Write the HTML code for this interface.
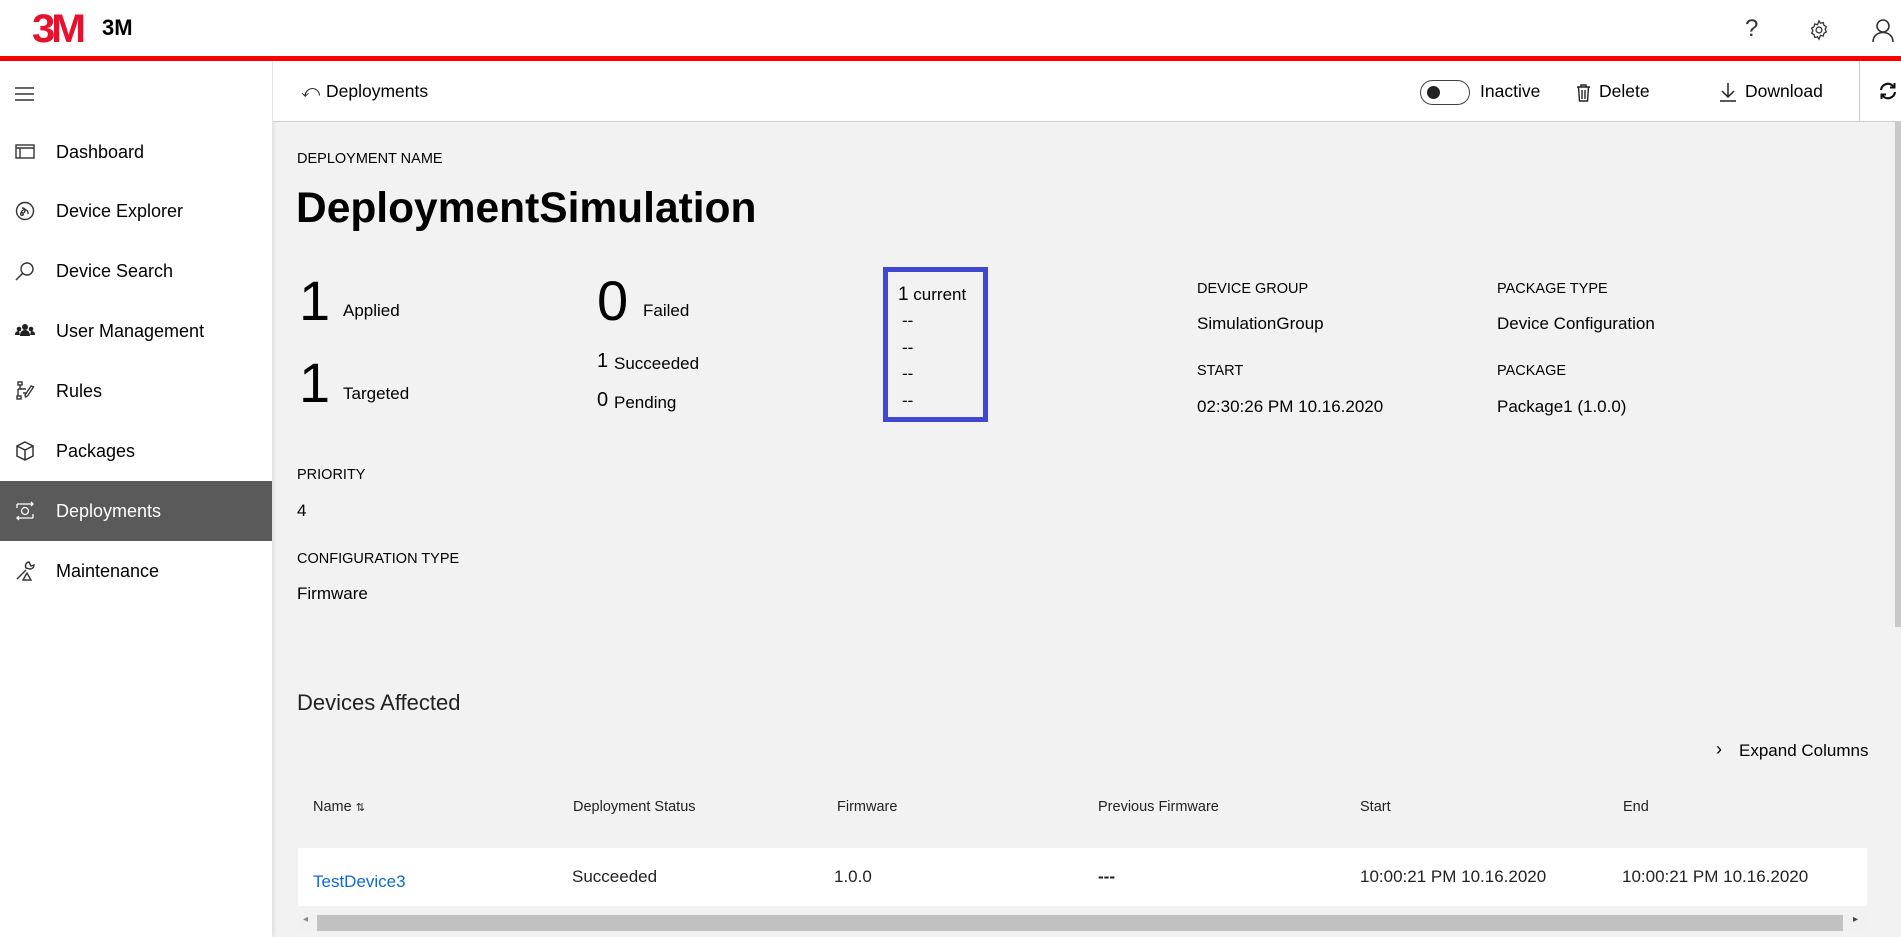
<!DOCTYPE html>
<html><head><meta charset="utf-8"><style>
*{margin:0;padding:0;box-sizing:border-box}
body{width:1901px;height:937px;overflow:hidden;background:#f2f2f2;font-family:"Liberation Sans",Arial,sans-serif;color:#000;position:relative}
.a{position:absolute;white-space:nowrap}
#top{position:absolute;left:0;top:0;width:1901px;height:56px;background:#fff}
#red{position:absolute;left:0;top:56px;width:1901px;height:5px;background:#f00}
#side{position:absolute;left:0;top:61px;width:272px;height:876px;background:#fff;box-shadow:2px 0 4px rgba(0,0,0,.08)}
.ni{position:absolute;left:0;width:272px;height:60px;font-size:18px;line-height:60px}
.ni span{position:absolute;left:56px}
.ni svg{position:absolute;left:15px;top:20px}
#bar{position:absolute;left:273px;top:61px;width:1628px;height:61px;background:#fff;border-bottom:1px solid #ccc}
.lab{font-size:14.5px}
.val{font-size:17px}
.th{font-size:14.5px;color:#222}
.td{font-size:17px;color:#222}
</style></head><body>
<div id="top">
 <div class="a" style="left:32px;top:7px;font-size:40px;font-weight:bold;color:#e8112d;letter-spacing:-4px;transform:scaleX(1.05);transform-origin:left">3M</div>
 <div class="a" style="left:102px;top:15px;font-size:22px;font-weight:bold">3M</div>
 <div class="a" style="left:1745px;top:15px;font-size:24px;color:#333">?</div>
 <svg class="a" style="left:1808px;top:19px" width="22" height="22" viewBox="0 0 24 24" fill="none" stroke="#333" stroke-width="1.4"><circle cx="12" cy="12" r="3.2"/><path d="M12 2l1.6 2.6 3-.8.8 3 2.6 1.6-1.3 2.8 1.3 2.8-2.6 1.6-.8 3-3-.8L12 22l-1.6-2.6-3 .8-.8-3L4 15.6 5.3 12.8 4 10l2.6-1.6.8-3 3 .8z"/></svg>
 <svg class="a" style="left:1872px;top:18px" width="22" height="24" viewBox="0 0 22 24" fill="none" stroke="#333" stroke-width="1.6"><circle cx="11" cy="8" r="6"/><path d="M1 24c0-6 4.5-9.5 10-9.5S21 18 21 24"/></svg>
</div>
<div id="red"></div>
<div id="side">
 <svg class="a" style="left:15px;top:26px" width="19" height="14"><path d="M0 1h19M0 7h19M0 13h19" stroke="#333" stroke-width="1.4"/></svg>
 <div class="ni" style="top:61px"><svg width="20" height="20" viewBox="0 0 20 20" fill="none" stroke="#333" stroke-width="1.4"><rect x="1" y="3" width="18" height="13"/><path d="M1 6h18M5 6v10"/></svg><span>Dashboard</span></div>
 <div class="ni" style="top:120px"><svg width="20" height="20" viewBox="0 0 20 20" fill="none" stroke="#333" stroke-width="1.4"><circle cx="10" cy="10" r="8.5"/><path d="M6 12c2-6 8-3 7 1M7 7c3 0 4 2 2 5"/><circle cx="7" cy="13" r="1.3"/></svg><span>Device Explorer</span></div>
 <div class="ni" style="top:180px"><svg width="20" height="20" viewBox="0 0 20 20" fill="none" stroke="#333" stroke-width="1.4"><circle cx="12" cy="8" r="6"/><path d="M8 12L1 19"/></svg><span>Device Search</span></div>
 <div class="ni" style="top:240px"><svg width="20" height="20" viewBox="0 0 20 20" fill="#222"><circle cx="10" cy="6" r="3"/><circle cx="4" cy="8" r="2.3"/><circle cx="16" cy="8" r="2.3"/><path d="M5 15c0-4 2-6 5-6s5 2 5 6zM0 14c0-3 1.5-4 4-4l1 4zM20 14c0-3-1.5-4-4-4l-1 4z"/></svg><span>User Management</span></div>
 <div class="ni" style="top:300px"><svg width="20" height="20" viewBox="0 0 20 20" fill="none" stroke="#333" stroke-width="1.4"><rect x="3" y="1" width="4" height="3"/><rect x="2" y="15" width="4" height="3"/><path d="M5 4v4h6M3 8v7M9 8h-6M8 12h4M16 5l-6 9 .5 2 2-1 6-9z"/></svg><span>Rules</span></div>
 <div class="ni" style="top:360px"><svg width="20" height="20" viewBox="0 0 20 20" fill="none" stroke="#333" stroke-width="1.5"><path d="M10 1l8 4v10l-8 4-8-4V5zM2 5l8 4 8-4M10 9v10"/></svg><span>Packages</span></div>
 <div class="ni" style="top:420px;background:#5a5a5a;color:#fff"><svg width="20" height="20" viewBox="0 0 20 20" fill="none" stroke="#fff" stroke-width="1.3"><circle cx="10" cy="10" r="3.5"/><path d="M2 3h16M2 17h16M2 3v4M18 13v4M16 1l2 2-2 2M4 15l-2 2 2 2"/></svg><span>Deployments</span></div>
 <div class="ni" style="top:480px"><svg width="20" height="20" viewBox="0 0 20 20" fill="none" stroke="#333" stroke-width="1.4"><path d="M2 18l9-9M14 1a4 4 0 0 0-3 6l4 1a4 4 0 0 0 4-4l-3 1-1-2zM12 12l-4 7h8z"/></svg><span>Maintenance</span></div>
</div>
<div id="bar">
 <div class="a" style="left:28px;top:20px;font-size:18px;color:#333">⤺</div>
 <div class="a" style="left:53px;top:20px;font-size:17.5px">Deployments</div>
 <div class="a" style="left:1147px;top:19px;width:50px;height:25px;border:1px solid #444;border-radius:13px;background:#fff"><div style="position:absolute;left:6px;top:5px;width:13px;height:13px;border-radius:50%;background:#222"></div></div>
 <div class="a" style="left:1207px;top:20px;font-size:17.5px">Inactive</div>
 <svg class="a" style="left:1303px;top:23px" width="15" height="18" viewBox="0 0 15 18" fill="none" stroke="#222" stroke-width="1.4"><path d="M1 3h13M5 3V1h5v2M2.5 3l1 14h8l1-14M6 6v9M9 6v9"/></svg>
 <div class="a" style="left:1326px;top:20px;font-size:17.5px">Delete</div>
 <svg class="a" style="left:1446px;top:21px" width="18" height="20" viewBox="0 0 18 20" fill="none" stroke="#222" stroke-width="1.5"><path d="M9 1v14M3 9l6 6 6-6M1 19h16"/></svg>
 <div class="a" style="left:1472px;top:20px;font-size:17.5px">Download</div>
 <div class="a" style="left:1586px;top:0;width:1px;height:60px;background:#ccc"></div>
 <svg class="a" style="left:1606px;top:21px" width="18" height="18" viewBox="0 0 18 18" fill="none" stroke="#111" stroke-width="2.2"><path d="M2 8a7 7 0 0 1 12.5-3.5M16 10a7 7 0 0 1-12.5 3.5"/><path d="M15.5 1v4.5H11M2.5 17v-4.5H7" stroke-width="2"/></svg>
</div>
<div class="a" style="left:1895px;top:122px;width:6px;height:505px;background:#c8c8c8"></div>

<div class="a lab" style="left:297px;top:151px">DEPLOYMENT NAME</div>
<div class="a" style="left:296px;top:185px;font-size:42.5px;font-weight:bold">DeploymentSimulation</div>

<div class="a" style="left:299px;top:268px;font-size:56px">1</div>
<div class="a val" style="left:343px;top:301px">Applied</div>
<div class="a" style="left:299px;top:350px;font-size:56px">1</div>
<div class="a val" style="left:343px;top:384px">Targeted</div>
<div class="a" style="left:597px;top:268px;font-size:56px">0</div>
<div class="a val" style="left:643px;top:301px">Failed</div>
<div class="a" style="left:597px;top:350px;font-size:20px">1</div><div class="a val" style="left:614px;top:354px">Succeeded</div>
<div class="a" style="left:597px;top:389px;font-size:20px">0</div><div class="a val" style="left:614px;top:393px">Pending</div>

<div class="a" style="left:883px;top:267px;width:105px;height:155px;border:5px solid #4048d0"></div>
<div class="a" style="left:898px;top:284px;font-size:17px"><span style="font-size:19px">1</span> current</div>
<div class="a val" style="left:902px;top:311px">--</div>
<div class="a val" style="left:902px;top:338px">--</div>
<div class="a val" style="left:902px;top:364px">--</div>
<div class="a val" style="left:902px;top:391px">--</div>

<div class="a lab" style="left:1197px;top:281px">DEVICE GROUP</div>
<div class="a val" style="left:1197px;top:314px">SimulationGroup</div>
<div class="a lab" style="left:1197px;top:363px">START</div>
<div class="a val" style="left:1197px;top:397px">02:30:26 PM 10.16.2020</div>
<div class="a lab" style="left:1497px;top:281px">PACKAGE TYPE</div>
<div class="a val" style="left:1497px;top:314px">Device Configuration</div>
<div class="a lab" style="left:1497px;top:363px">PACKAGE</div>
<div class="a val" style="left:1497px;top:397px">Package1 (1.0.0)</div>

<div class="a lab" style="left:297px;top:467px">PRIORITY</div>
<div class="a val" style="left:297px;top:501px">4</div>
<div class="a lab" style="left:297px;top:551px">CONFIGURATION TYPE</div>
<div class="a val" style="left:297px;top:584px">Firmware</div>

<div class="a" style="left:297px;top:690px;font-size:22px;color:#222">Devices Affected</div>
<div class="a" style="left:1716px;top:739px;font-size:18px">›</div>
<div class="a val" style="left:1739px;top:741px">Expand Columns</div>

<div class="a th" style="left:313px;top:799px">Name <span style="font-size:11px">⇅</span></div>
<div class="a th" style="left:573px;top:799px">Deployment Status</div>
<div class="a th" style="left:837px;top:799px">Firmware</div>
<div class="a th" style="left:1098px;top:799px">Previous Firmware</div>
<div class="a th" style="left:1360px;top:799px">Start</div>
<div class="a th" style="left:1623px;top:799px">End</div>

<div class="a" style="left:298px;top:848px;width:1569px;height:58px;background:#fff"></div>
<div class="a td" style="left:313px;top:872px;color:#0b6bd3">TestDevice3</div>
<div class="a td" style="left:572px;top:867px">Succeeded</div>
<div class="a td" style="left:834px;top:867px">1.0.0</div>
<div class="a td" style="left:1098px;top:867px;font-weight:bold">---</div>
<div class="a td" style="left:1360px;top:867px">10:00:21 PM 10.16.2020</div>
<div class="a td" style="left:1622px;top:867px">10:00:21 PM 10.16.2020</div>

<div class="a" style="left:298px;top:912px;width:1569px;height:20px;background:#f1f1f1"></div>
<div class="a" style="left:303px;top:914px;font-size:10px;color:#888">◂</div>
<div class="a" style="left:1853px;top:914px;font-size:10px;color:#444">▸</div>
<div class="a" style="left:317px;top:915px;width:1526px;height:16px;background:#c1c1c1"></div>
</body></html>
